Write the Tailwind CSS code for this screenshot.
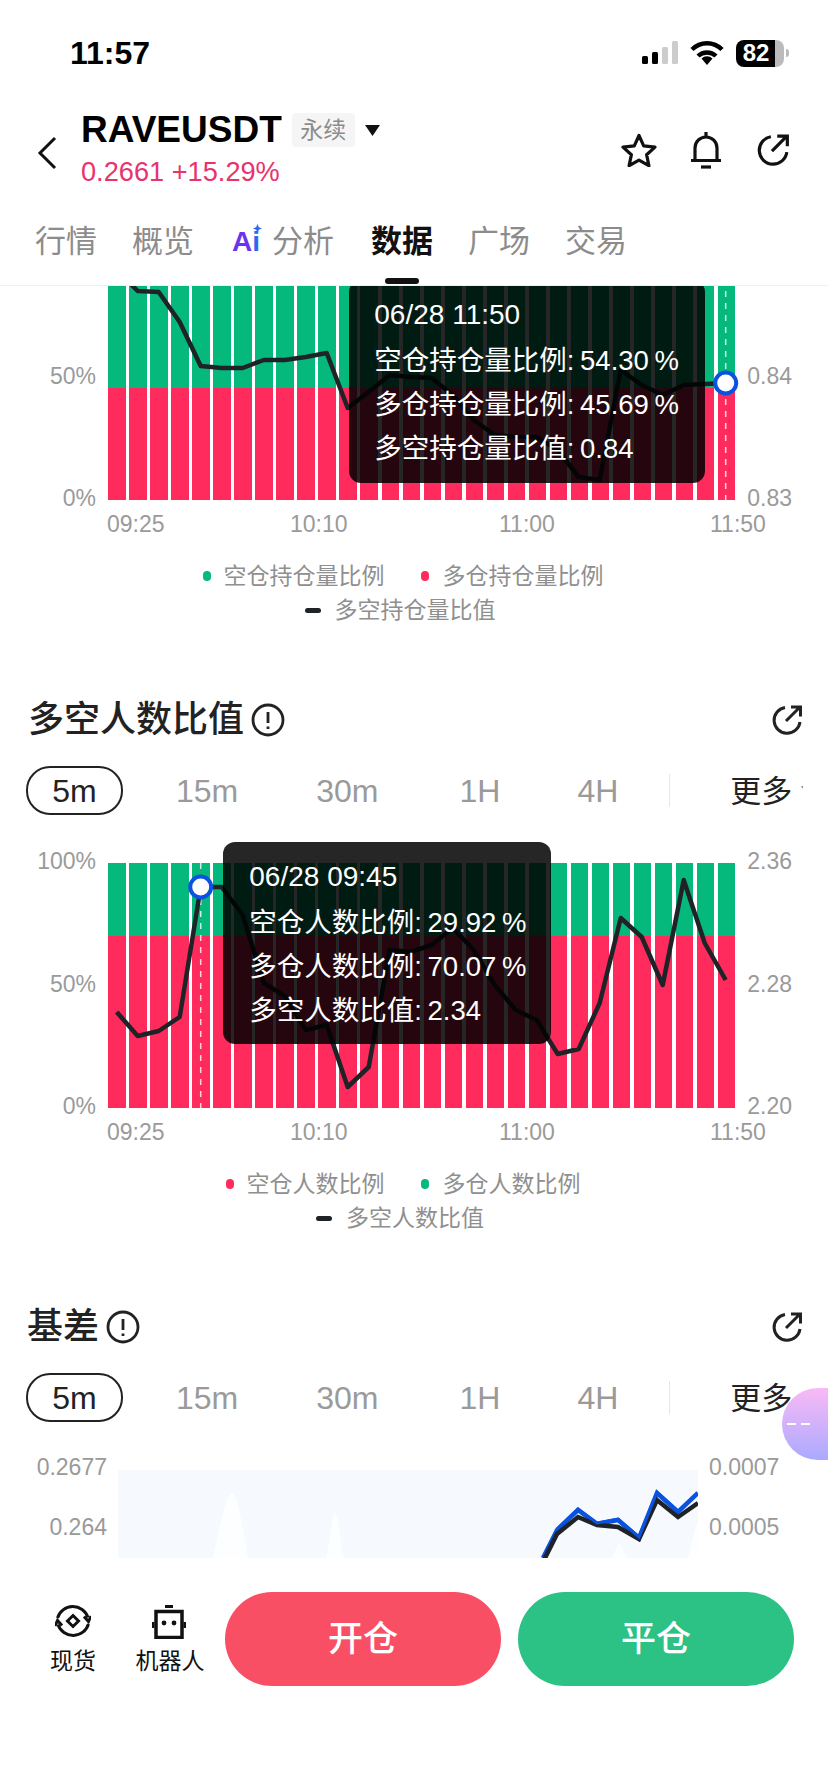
<!DOCTYPE html>
<html lang="zh-CN">
<head>
    <meta charset="UTF-8" />
    <meta name="viewport" content="width=device-width, initial-scale=1.0">
    <title>RAVEUSDT 数据</title>
    <script src="https://cdn.jsdelivr.net/npm/@tailwindcss/browser@4"></script>
</head>
<body class="bg-white">
<div class="relative w-[828px] h-[1792px] overflow-hidden bg-white text-[#222] font-['Liberation_Sans','Noto_Sans_CJK_SC',sans-serif]">

    <!-- Status bar -->
    <div class="h-[106px] flex items-center pl-[70px] pr-[39px]">
        <span class="text-[32px] font-bold text-black">11:57</span>
        <svg class="ml-auto" width="36" height="26" viewBox="0 0 36 26">
            <rect x="0" y="16" width="6" height="8" rx="1.5" fill="#000"/>
            <rect x="10" y="12" width="6" height="12" rx="1.5" fill="#000"/>
            <rect x="20" y="7" width="6" height="17" rx="1.5" fill="#ccc"/>
            <rect x="30" y="1" width="6" height="23" rx="1.5" fill="#ccc"/>
        </svg>
        <svg class="ml-[12px]" width="34" height="26" viewBox="0 0 34 26" fill="none" stroke="#000" stroke-width="4.5">
            <path d="M2 9.5a21 21 0 0 1 30 0"/>
            <path d="M8 16a13 13 0 0 1 18 0"/>
            <path d="M11.5 18.5 17 25l5.500-6.500a8 8 0 0 0-11 0z" fill="#000" stroke="none"/>
        </svg>
        <div class="ml-[12px] w-[48px] h-[27px] rounded-[8px] flex items-center justify-center pr-[8px] text-[24px] font-bold text-white bg-[linear-gradient(90deg,#000_81%,#bbb_81%)]">82</div>
        <div class="ml-[2px] w-[3px] h-[8px] rounded-r-full bg-[#bbb]"></div>
    </div>

    <!-- Header -->
    <header class="h-[92px] flex items-start">
        <svg class="mt-[30px] ml-[36px]" width="22" height="34" viewBox="0 0 22 34" fill="none" stroke="#111" stroke-width="3"><path d="M19 2 4 17l15 15"/></svg>
        <div class="ml-[23px]">
            <div class="h-[48px] flex items-center">
                <span class="text-[37px] font-bold text-black">RAVEUSDT</span>
                <span class="ml-[10px] w-[63px] h-[34px] rounded-[4px] bg-[#f5f5f5] flex items-center justify-center text-[23px] text-[#8c8c8c]">永续</span>
                <svg class="ml-[10px]" width="15" height="11" viewBox="0 0 15 11"><path d="M0 0h15L7.500 11z" fill="#111"/></svg>
            </div>
            <div class="h-[36px] flex items-center text-[27.200px] text-[#e8336d]">0.2661 +15.29%</div>
        </div>
        <div class="ml-auto mt-[25px] flex items-center pr-[38px]">
            <svg width="36" height="34" viewBox="0 0 36 34" fill="none" stroke="#111" stroke-width="3.200" stroke-linejoin="round"><path d="m18 2.500 4.700 10.300 11.300 1.300-8.400 7.600 2.300 11-9.900-5.600-9.900 5.600 2.300-11L2 14.100l11.300-1.300z"/></svg>
            <svg class="ml-[33px]" width="32" height="38" viewBox="0 0 32 38" fill="none" stroke="#111" stroke-width="3.200"><path d="M16 1v4M5 29V17a11 11 0 0 1 22 0v12M1 29.500h30"/><path d="M11 36h10"/></svg>
            <svg class="ml-[34px]" width="34" height="34" viewBox="0 0 32 32" fill="none" stroke="#111" stroke-width="3"><path d="M14 3.500A13 13 0 1 0 29 18"/><path d="M15 17 29 3M20 3h9.500v9.500"/></svg>
        </div>
    </header>

    <!-- Tabs -->
    <nav class="h-[88px] pt-[1px] border-b border-[#f0f0f0] flex items-center pl-[35px] gap-[35px] text-[31px] text-[#8c8c8c]">
        <span>行情</span>
        <span>概览</span>
        <span class="ml-[3px] flex items-center gap-[10px]">
            <span class="relative font-bold text-[28px] leading-none pr-[2px]"><span class="text-[#6a34ee]">A</span><span class="text-[#2a6af0]">i</span>
                <svg class="absolute -top-[4px] right-0" width="9" height="9" viewBox="0 0 10 10"><path d="M5 0 6.500 3.500 10 5 6.500 6.500 5 10 3.500 6.500 0 5 3.500 3.500z" fill="#2a6af0"/></svg>
            </span>
            <span>分析</span>
        </span>
        <span class="relative ml-[2px] text-[#111] font-semibold">数据
            <span class="absolute left-[14px] top-[59px] w-[34px] h-[6px] rounded-full bg-[#111]"></span>
        </span>
        <span>广场</span>
        <span>交易</span>
    </nav>

    <main class="relative h-[1272px] overflow-hidden">

        <!-- 多空持仓量比值 chart, scrolled under the header -->
        <div class="flex h-[245px] -mt-[31px]">
            <div class="w-[96px] h-[269px] -mt-[14px] flex flex-col justify-between items-end text-[23px] leading-[24px] text-[#9a9a9a]">
                <span class="h-[24px]"></span><span>50%</span><span>0%</span>
            </div>
            <div id="chart-position" class="relative ml-[12.300px] w-[627px] h-[245px]">
                <div class="absolute left-[241px] top-[25px] w-[356px] h-[203px] rounded-[12px] bg-black/85 z-10 pl-[25px] pt-[13px] text-[27.500px] [word-spacing:-2px] text-white">
                    <div class="h-[44px] mb-[2px] flex items-center text-[28px] [word-spacing:0]">06/28 11:50</div>
                    <div class="h-[44px] flex items-center">空仓持仓量比例: 54.30 %</div>
                    <div class="h-[44px] flex items-center">多仓持仓量比例: 45.69 %</div>
                    <div class="h-[44px] flex items-center">多空持仓量比值: 0.84</div>
                </div>
            </div>
            <div class="ml-[12px] h-[269px] -mt-[14px] flex flex-col justify-between text-[23px] leading-[24px] text-[#9a9a9a]">
                <span class="h-[24px]"></span><span>0.84</span><span>0.83</span>
            </div>
        </div>
        <div class="mt-[12px] h-[24px] pl-[107px] grid grid-cols-[183px_209px_211px_auto] text-[23px] leading-[24px] text-[#9a9a9a]">
            <span>09:25</span><span>10:10</span><span>11:00</span><span>11:50</span>
        </div>
        <div class="mt-[23px] h-[34px] pr-[22px] flex items-center justify-center gap-[36px] text-[23px] text-[#8f8f8f]">
            <span class="flex items-center gap-[13px]"><i class="w-[8px] h-[10px] rounded-full bg-[#05b87b]"></i>空仓持仓量比例</span>
            <span class="flex items-center gap-[14px]"><i class="w-[8px] h-[10px] rounded-full bg-[#fe2b5c]"></i>多仓持仓量比例</span>
        </div>
        <div class="h-[34px] pr-[28px] flex items-center justify-center gap-[14px] text-[23px] text-[#8f8f8f]">
            <i class="w-[16px] h-[5px] rounded-full bg-[#1f2328]"></i>多空持仓量比值
        </div>

        <!-- 多空人数比值 -->
        <div class="mt-[71px] h-[44px] flex items-center pl-[28px] pr-[25px]">
            <h2 class="text-[36px] font-medium">多空人数比值</h2>
            <svg class="ml-[7px]" width="34" height="34" viewBox="0 0 34 34" fill="none" stroke="#222" stroke-width="2.800"><circle cx="17" cy="17" r="15"/><path d="M17 9v11M17 23.500v2.500"/></svg>
            <svg class="ml-auto" width="32" height="32" viewBox="0 0 32 32" fill="none" stroke="#222" stroke-width="3"><path d="M14 3.500A13 13 0 1 0 29 18"/><path d="M15 17 29 3M20 3h9.500v9.500"/></svg>
        </div>
        <div class="mt-[24px] ml-[26px] w-[777px] h-[49px] flex items-center overflow-hidden text-[32px] text-[#9a9a9a]">
            <span class="shrink-0 w-[97px] h-[49px] rounded-[24px] border-2 border-[#222] flex items-center justify-center text-[#222]">5m</span>
            <span class="ml-[53px] shrink-0">15m</span>
            <span class="ml-[78px] shrink-0">30m</span>
            <span class="ml-[81px] shrink-0">1H</span>
            <span class="ml-[77px] shrink-0">4H</span>
            <i class="ml-[51px] shrink-0 w-px h-[33px] bg-[#e6e6e6]"></i>
            <span class="ml-[60px] pt-[3px] shrink-0 text-[31px] text-[#222]">更多</span>
            <svg class="ml-[9px] shrink-0" width="12" height="9" viewBox="0 0 12 9"><path d="M0 0h12L6 9z" fill="#888"/></svg>
        </div>
        <div class="mt-[48px] flex h-[245px]">
            <div class="w-[96px] h-[269px] -mt-[14px] flex flex-col justify-between items-end text-[23px] leading-[24px] text-[#9a9a9a]">
                <span>100%</span><span>50%</span><span>0%</span>
            </div>
            <div id="chart-people" class="relative ml-[12.300px] w-[627px] h-[245px]">
                <div class="absolute left-[115px] -top-[21px] w-[328px] h-[202px] rounded-[12px] bg-black/85 z-10 pl-[26px] pt-[13px] text-[27.500px] [word-spacing:-2px] text-white">
                    <div class="h-[44px] mb-[2px] flex items-center text-[28px] [word-spacing:0]">06/28 09:45</div>
                    <div class="h-[44px] flex items-center">空仓人数比例: 29.92 %</div>
                    <div class="h-[44px] flex items-center">多仓人数比例: 70.07 %</div>
                    <div class="h-[44px] flex items-center">多空人数比值: 2.34</div>
                </div>
            </div>
            <div class="ml-[12px] h-[269px] -mt-[14px] flex flex-col justify-between text-[23px] leading-[24px] text-[#9a9a9a]">
                <span>2.36</span><span>2.28</span><span>2.20</span>
            </div>
        </div>
        <div class="mt-[12px] h-[24px] pl-[107px] grid grid-cols-[183px_209px_211px_auto] text-[23px] leading-[24px] text-[#9a9a9a]">
            <span>09:25</span><span>10:10</span><span>11:00</span><span>11:50</span>
        </div>
        <div class="mt-[23px] h-[34px] pr-[22px] flex items-center justify-center gap-[36px] text-[23px] text-[#8f8f8f]">
            <span class="flex items-center gap-[13px]"><i class="w-[8px] h-[10px] rounded-full bg-[#fe2b5c]"></i>空仓人数比例</span>
            <span class="flex items-center gap-[14px]"><i class="w-[8px] h-[10px] rounded-full bg-[#05b87b]"></i>多仓人数比例</span>
        </div>
        <div class="h-[34px] pr-[28px] flex items-center justify-center gap-[14px] text-[23px] text-[#8f8f8f]">
            <i class="w-[16px] h-[5px] rounded-full bg-[#1f2328]"></i>多空人数比值
        </div>

        <!-- 基差 -->
        <div class="mt-[70px] h-[44px] flex items-center pl-[27px] pr-[25px]">
            <h2 class="text-[36px] font-medium">基差</h2>
            <svg class="ml-[7px]" width="34" height="34" viewBox="0 0 34 34" fill="none" stroke="#222" stroke-width="2.800"><circle cx="17" cy="17" r="15"/><path d="M17 9v11M17 23.500v2.500"/></svg>
            <svg class="ml-auto" width="32" height="32" viewBox="0 0 32 32" fill="none" stroke="#222" stroke-width="3"><path d="M14 3.500A13 13 0 1 0 29 18"/><path d="M15 17 29 3M20 3h9.500v9.500"/></svg>
        </div>
        <div class="mt-[24px] ml-[26px] w-[777px] h-[49px] flex items-center overflow-hidden text-[32px] text-[#9a9a9a]">
            <span class="shrink-0 w-[97px] h-[49px] rounded-[24px] border-2 border-[#222] flex items-center justify-center text-[#222]">5m</span>
            <span class="ml-[53px] shrink-0">15m</span>
            <span class="ml-[78px] shrink-0">30m</span>
            <span class="ml-[81px] shrink-0">1H</span>
            <span class="ml-[77px] shrink-0">4H</span>
            <i class="ml-[51px] shrink-0 w-px h-[33px] bg-[#e6e6e6]"></i>
            <span class="ml-[60px] pt-[3px] shrink-0 text-[31px] text-[#222]">更多</span>
            <svg class="ml-[9px] shrink-0" width="12" height="9" viewBox="0 0 12 9"><path d="M0 0h12L6 9z" fill="#888"/></svg>
        </div>
        <div class="mt-[48px] flex">
            <div class="w-[107px] -mt-[33px] flex flex-col items-end text-[23px] text-[#9a9a9a]">
                <span class="h-[60px] flex items-center">0.2677</span>
                <span class="h-[60px] flex items-center">0.264</span>
            </div>
            <svg class="ml-[11px] shrink-0 bg-[#f6f9fd]" width="580" height="88" viewBox="0 0 580 88" fill="none">
                <path d="M95 88C101 60 108 23 114 23s11 37 16 65z" fill="#fdfeff"/>
                <path d="M208 88c4-16 6-45 9-45s5 29 9 45z" fill="#fdfeff"/>
                <path d="M494 88c3-5 5-15 7-15s5 10 8 15z" fill="#fdfeff"/>
                <path d="M570 88c3-8 6-28 10-38v38z" fill="#fdfeff"/>
                <polyline points="425,88 439,60 460,40 479,54 500,50 521,68 539,23 560,42 580,23" stroke="#0a52e0" stroke-width="4.500"/>
                <polyline points="425,92 439,64 460,47 479,55 500,57 521,69 539,30 560,47 580,33" stroke="#1f2328" stroke-width="4.500"/>
                <polyline points="439,59 460,39 479,53 500,49 521,67 539,22 560,41" stroke="#0a52e0" stroke-width="3"/>
            </svg>
            <div class="ml-[11px] -mt-[33px] flex flex-col text-[23px] text-[#9a9a9a]">
                <span class="h-[60px] flex items-center">0.0007</span>
                <span class="h-[60px] flex items-center">0.0005</span>
            </div>
        </div>
    </main>

    <!-- Floating assistant button -->
    <div class="absolute left-[782px] top-[1388px] w-[46px] h-[72px] rounded-l-[36px] bg-linear-to-b from-[#f9b9f5] to-[#a9a9ff] z-20 flex items-center gap-[5px] pl-[5px]">
        <i class="w-[9px] h-[2px] bg-white"></i><i class="w-[9px] h-[2px] bg-white"></i>
    </div>

    <!-- Bottom action bar -->
    <footer class="h-[234px] pt-[34px] flex items-start">
        <div class="ml-[43px] w-[60px] pt-[11px] flex flex-col items-center text-[23px] text-[#111]">
            <svg width="36" height="36" viewBox="0 0 36 36" fill="none" stroke="#111" stroke-width="3">
                <path d="M2.500 15A16 16 0 0 1 33 14.500"/>
                <path d="m29 13.500 4.500 5 2.500-5.500"/>
                <path d="M33.500 21A16 16 0 0 1 3 21.500"/>
                <path d="m7 22.500-4.500-5L0 23"/>
                <path d="m18 12.500 5.500 5.500-5.500 5.500-5.500-5.500z"/>
            </svg>
            <span class="mt-[5px] h-[34px] flex items-center">现货</span>
        </div>
        <div class="ml-[27px] w-[80px] pt-[11px] flex flex-col items-center text-[23px] text-[#111]">
            <svg width="36" height="36" viewBox="0 0 36 36" fill="none" stroke="#111" stroke-width="3.500">
                <rect x="13" y="2" width="8" height="3" fill="#111" stroke="none"/>
                <rect x="4" y="8.500" width="26" height="26"/>
                <path d="M0 19h2.500v6H0zM31.500 19H34v6h-2.500z" fill="#111" stroke="none"/>
                <circle cx="12" cy="20" r="2.400" fill="#111" stroke="none"/>
                <circle cx="22" cy="20" r="2.400" fill="#111" stroke="none"/>
            </svg>
            <span class="mt-[5px] h-[34px] flex items-center">机器人</span>
        </div>
        <button class="ml-[15px] w-[276px] h-[94px] rounded-[47px] bg-[#f94f64] text-white text-[35px] font-medium">开仓</button>
        <button class="ml-[17px] w-[276px] h-[94px] rounded-[47px] bg-[#2cc185] text-white text-[35px] font-medium">平仓</button>
    </footer>
</div>

<script>
    // y values are page pixels read off each chart, one per 5m bar
    const charts = [
        {
            id: 'chart-position', top: 255, red: 45.69, marker: 29,
            ys: [270,291,292,322,366,368,368,360,360,357,353,408,392,375,377,378,395,420,435,437,437,450,477,480,370,385,395,385,384,383]
        },
        {
            id: 'chart-people', top: 863, red: 70.07, marker: 4,
            ys: [1012,1036,1031,1017,887,887,915,983,996,1030,1025,1087,1067,950,952,945,928,950,985,1010,1020,1054,1049,1003,918,937,985,880,943,980]
        }
    ];

    function createBars(red) {
        let bars = '';
        for (let i = 0; i < 30; i++) {
            bars += `<div class="flex-1 flex flex-col"><div class="flex-1 bg-[#05b87b]"></div><div class="bg-[#fe2b5c]" style="height:${red}%"></div></div>`;
        }
        return `<div class="absolute inset-0 flex gap-[3.700px]">${bars}</div>`;
    }

    function createLine(chart) {
        const xAt = i => 8.7 + i * 21;
        const points = chart.ys.map((y, i) => `${xAt(i)},${y - chart.top}`).join(' ');
        const mx = xAt(chart.marker);
        const my = chart.ys[chart.marker] - chart.top;
        return `<svg class="absolute inset-0 overflow-visible" width="627" height="245" fill="none">
            <line x1="${mx}" y1="0" x2="${mx}" y2="248" stroke="#fff" stroke-opacity="0.8" stroke-width="1.500" stroke-dasharray="6 6"/>
            <polyline points="${points}" stroke="#1f2328" stroke-width="4.500" stroke-linejoin="round"/>
            <circle cx="${mx}" cy="${my}" r="10.500" fill="#fff" stroke="#0a52e0" stroke-width="4"/>
        </svg>`;
    }

    charts.forEach(chart => {
        const el = document.getElementById(chart.id);
        el.insertAdjacentHTML('afterbegin', createBars(chart.red) + createLine(chart));
    });
</script>
</body>
</html>
